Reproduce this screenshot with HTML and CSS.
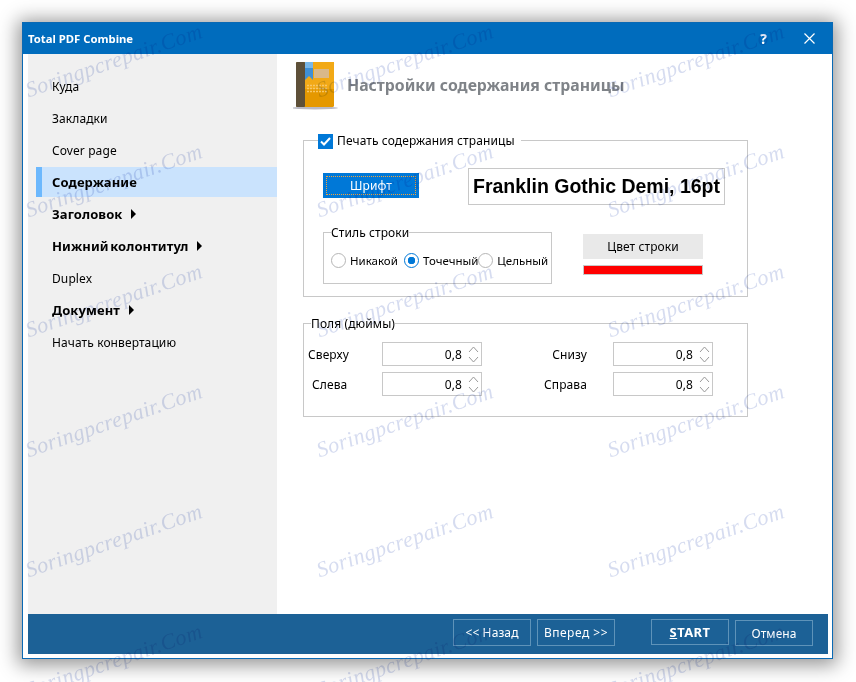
FILE: index.html
```html
<!DOCTYPE html>
<html lang="ru">
<head>
<meta charset="utf-8">
<title>Total PDF Combine</title>
<link rel="stylesheet" href="styles.css">
</head>
<body>
<div class="window">
  <header class="titlebar">
    <span class="title">Total PDF Combine</span>
    <span class="help">?</span>
    <svg class="close" width="11" height="11" viewBox="0 0 11 11"><path d="M.5.5l10 10M10.500.5l-10 10" stroke="#fff" stroke-width="1.2" fill="none"/></svg>
  </header>
  <div class="client">
    <div class="main">
      <nav class="sidebar">
        <div class="item">Куда</div>
        <div class="item">Закладки</div>
        <div class="item">Cover page</div>
        <div class="item active">Содержание</div>
        <div class="item bold">Заголовок <i class="arrow"></i></div>
        <div class="item bold">Нижний колонтитул <i class="arrow"></i></div>
        <div class="item">Duplex</div>
        <div class="item bold">Документ <i class="arrow"></i></div>
        <div class="item">Начать конвертацию</div>
      </nav>
      <section class="content">
        <div class="heading">
          <svg class="book" width="46" height="50" viewBox="0 0 46 50">
            <ellipse cx="22" cy="47" rx="23" ry="1.500" fill="#b9b9c4"/>
            <rect x="3" y="1" width="38" height="45" rx="1.500" fill="#e59800"/>
            <rect x="12" y="1" width="29" height="27" fill="#f2a916"/>
            <rect x="3" y="1" width="9" height="45" rx="1" fill="#5e5039"/>
            <rect x="21" y="8" width="15" height="9" fill="#d9b88a"/>
            <path d="M12 1h8v18l-4-4-4 4z" fill="#3f8fd6"/>
            <path d="M12 1h8v6h-8z" fill="#79b7e8"/>
            <path d="M14 24.500h20M14 27.500h20M14 30.500h20" stroke="#f8c768" stroke-width="1.400" stroke-dasharray="2 1" fill="none"/>
          </svg>
          <h1>Настройки содержания страницы</h1>
        </div>

        <fieldset class="group print">
          <legend class="check-legend">
            <span class="checkbox"><svg width="15" height="15" viewBox="0 0 15 15"><path d="M3 7.500l3 3 6-6.500" stroke="#fff" stroke-width="2" fill="none"/></svg></span>
            Печать содержания страницы
          </legend>
          <div class="font-row">
            <button class="font-btn"><span>Шрифт</span></button>
            <div class="font-preview">Franklin Gothic Demi, 16pt</div>
          </div>
          <div class="style-row">
            <fieldset class="group line-style">
              <legend>Стиль строки</legend>
              <div class="radios">
                <label class="radio r1"><span class="dot"></span>Никакой</label>
                <label class="radio r2"><span class="dot on"></span>Точечный</label>
                <label class="radio"><span class="dot"></span>Цельный</label>
              </div>
            </fieldset>
            <div class="color-col">
              <button class="color-btn">Цвет строки</button>
              <div class="swatch"></div>
            </div>
          </div>
        </fieldset>

        <fieldset class="group margins">
          <legend>Поля (дюймы)</legend>
          <div class="spin-grid">
            <span class="lbl first">Сверху</span>
            <div class="spin"><span>0,8</span><svg width="13" height="19" viewBox="0 0 13 19"><path d="M2 7l4.500-5 4.500 5M2 12l4.500 5 4.500-5" stroke="#9a9a9a" fill="none"/></svg></div>
            <span class="lbl second">Снизу</span>
            <div class="spin"><span>0,8</span><svg width="13" height="19" viewBox="0 0 13 19"><path d="M2 7l4.500-5 4.500 5M2 12l4.500 5 4.500-5" stroke="#9a9a9a" fill="none"/></svg></div>
            <span class="lbl first alt">Слева</span>
            <div class="spin"><span>0,8</span><svg width="13" height="19" viewBox="0 0 13 19"><path d="M2 7l4.500-5 4.500 5M2 12l4.500 5 4.500-5" stroke="#9a9a9a" fill="none"/></svg></div>
            <span class="lbl second">Справа</span>
            <div class="spin"><span>0,8</span><svg width="13" height="19" viewBox="0 0 13 19"><path d="M2 7l4.500-5 4.500 5M2 12l4.500 5 4.500-5" stroke="#9a9a9a" fill="none"/></svg></div>
          </div>
        </fieldset>
      </section>
    </div>
    <footer class="footer">
      <button class="fbtn wide-a">&lt;&lt; Назад</button>
      <button class="fbtn wide-a next">Вперед &gt;&gt;</button>
      <button class="fbtn start"><u>S</u>TART</button>
      <button class="fbtn cancel">Отмена</button>
    </footer>
  </div>
</div>
<div class="watermark">
  <span>Soringpcrepair.Com</span><span>Soringpcrepair.Com</span><span>Soringpcrepair.Com</span>
  <span>Soringpcrepair.Com</span><span>Soringpcrepair.Com</span><span>Soringpcrepair.Com</span>
  <span>Soringpcrepair.Com</span><span>Soringpcrepair.Com</span><span>Soringpcrepair.Com</span>
  <span>Soringpcrepair.Com</span><span>Soringpcrepair.Com</span><span>Soringpcrepair.Com</span>
  <span>Soringpcrepair.Com</span><span>Soringpcrepair.Com</span><span>Soringpcrepair.Com</span>
  <span>Soringpcrepair.Com</span><span>Soringpcrepair.Com</span><span>Soringpcrepair.Com</span>
</div>
</body>
</html>
```
FILE: styles.css
```css
* { box-sizing: border-box; }
html, body { margin: 0; height: 682px; overflow: hidden; background: #fff; }
body { position: relative; padding: 22px 23px 23px 22px; font: 12px "Noto Sans", "Liberation Sans", sans-serif; letter-spacing: .1px; color: #000; }
button { font: inherit; letter-spacing: inherit; margin: 0; padding: 0; }

.window { height: 637px; display: flex; flex-direction: column; border: 1px solid #0a69b4; background: #fff; box-shadow: 0 2px 18px 4px rgba(0,0,0,.42); }
.titlebar { height: 31px; flex: none; display: flex; align-items: center; background: #006cbd; color: #fff; padding: 0 17px 0 5px; }
.title { font-weight: 700; font-size: 11.3px; letter-spacing: 0; flex: 1; }
.help { font-size: 14px; font-weight: 700; margin-right: 37px; }

.client { flex: 1; display: flex; flex-direction: column; padding: 0 4px 4px 5px; min-height: 0; }
.main { flex: 1; display: flex; min-height: 0; }
.sidebar { width: 249px; flex: none; background: #f0f0f0; padding-top: 16px; padding-left: 8px; }
.item { height: 32px; padding-left: 16px; display: flex; align-items: center; gap: 9px; }
.item.active { font-weight: 700; font-size: 13px; background: #cae3fd; border-left: 6px solid #6cb8fd; padding-left: 10px; height: 30px; margin: 1px 0; }
.item.bold { font-weight: 700; font-size: 13px; word-spacing: -2px; }
.arrow { width: 0; height: 0; border-left: 5px solid #000; border-top: 5px solid transparent; border-bottom: 5px solid transparent; }

.content { flex: 1; padding: 7px 0 0 16px; min-width: 0; }
.heading { display: flex; align-items: center; gap: 8px; height: 50px; }
.book { flex: none; }
h1 { margin: 0 0 2px; font-size: 15.8px; letter-spacing: 0; font-weight: 700; color: #7f8388; }

.group { border: 1px solid #c8c8c8; margin: 0; padding: 0; min-width: 0; }
legend { padding: 2px 0 0; margin-left: 7px; line-height: 16px; }
.print { width: 445px; height: 166px; margin: 20px 0 0 10px; }
.check-legend { display: flex; align-items: center; gap: 4px; margin-left: 14px; padding-right: 6px; }
.checkbox { width: 15px; height: 15px; background: #0078d7; display: block; }
.checkbox svg { display: block; }

.font-row { display: flex; margin: 19px 0 0 19px; }
.font-btn { width: 96px; height: 25px; margin-top: 5px; background: #0078d7; color: #fff; border: 0; padding: 3px; flex: none; }
.font-btn span { display: block; height: 100%; border: 1px dotted #f2a33c; line-height: 17px; }
.font-preview { margin-left: 49px; width: 257px; height: 37px; border: 1px solid #c8c8c8; font: 700 19.500px "Liberation Sans", sans-serif; letter-spacing: 0; display: flex; align-items: center; justify-content: center; white-space: nowrap; }

.style-row { display: flex; margin: 18px 0 0 19px; }
.line-style { width: 229px; height: 61px; flex: none; }
.radios { display: flex; padding: 12px 0 0 7px; font-size: 11.500px; letter-spacing: 0; }
.radio { display: flex; align-items: center; gap: 4px; white-space: nowrap; }
.radio.r1 { flex: 0 0 73px; }
.radio.r2 { flex: 0 0 74px; }
.dot { width: 15px; height: 15px; border: 1px solid #b5b5b5; border-radius: 50%; background: #fff; flex: none; }
.dot.on { border-color: #0078d7; background: radial-gradient(circle, #0078d7 0 3.500px, #fff 4px); }

.color-col { margin: 11px 0 0 31px; width: 120px; }
.color-btn { width: 120px; height: 25px; border: 0; background: #e9e9e9; display: block; }
.swatch { margin-top: 6px; height: 10px; background: #f00; border: 1px solid #c8c8c8; }

.margins { width: 445px; height: 103px; margin: 17px 0 0 10px; }
.spin-grid { display: grid; grid-template-columns: 78px 100px 131px 100px; grid-auto-rows: 24px; row-gap: 6px; padding-top: 10px; align-items: center; }
.lbl.first { padding-left: 4px; }
.lbl.first.alt { padding-left: 8px; }
.lbl.second { text-align: right; padding-right: 26px; }
.spin { height: 24px; border: 1px solid #c8c8c8; display: flex; align-items: center; justify-content: flex-end; gap: 5px; padding-right: 1px; }
.spin svg { display: block; }

.footer { height: 40px; flex: none; background: #1c6196; display: flex; align-items: flex-start; padding-top: 5px; }
.fbtn { height: 27px; background: transparent; color: #fff; border: 1px solid #5e93b9; width: 78px; }
.wide-a:first-child { margin-left: 425px; }
.wide-a + .wide-a { margin-left: 6px; }
.next { letter-spacing: .5px; }
.start { margin-left: 36px; font-weight: 700; font-size: 13px; letter-spacing: .4px; height: 26px; }
.cancel { margin: 1px 0 0 6px; height: 26px; }

.watermark { position: absolute; left: 0; top: 0; width: 856px; height: 682px; pointer-events: none; overflow: hidden; mix-blend-mode: multiply; display: grid; grid-template-columns: repeat(3, 291px); grid-auto-rows: 120px; padding: 0 0 0 21px; }
.watermark span { display: block; width: 190px; transform: rotate(-19deg); font: italic 22px/1 "Liberation Serif", serif; letter-spacing: .4px; color: rgba(120,140,205,.3); white-space: nowrap; align-self: center; }
```
